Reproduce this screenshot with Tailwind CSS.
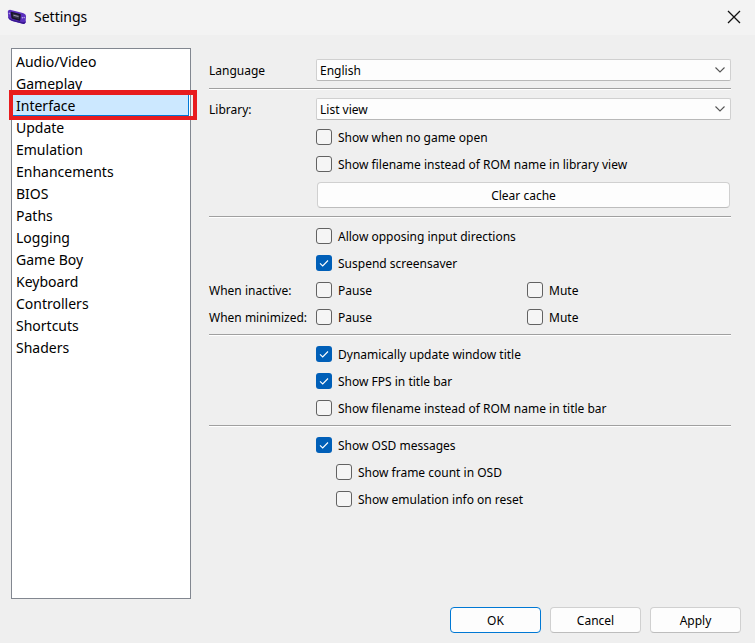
<!DOCTYPE html>
<html lang="en">
<head>
<meta charset="utf-8">
<meta name="viewport" content="width=device-width, initial-scale=1">
<title>Settings</title>
<script src="https://cdn.jsdelivr.net/npm/@tailwindcss/browser@4"></script>
</head>
<body class="flex min-h-screen flex-col bg-[#efefef] font-['Noto_Sans','Open_Sans',sans-serif] text-xs leading-[18px] text-black">

<svg class="hidden" aria-hidden="true">
  <symbol id="chevron" viewBox="0 0 12 8"><path d="M1.500 1.500 6 6l4.500-4.500" fill="none" stroke="#555" stroke-width="1.100"/></symbol>
  <symbol id="tick" viewBox="0 0 16 16"><path d="m4 8.300 2.700 2.700L12 5.500" fill="none" stroke="#fff" stroke-width="1.100"/></symbol>
</svg>

<header class="flex h-[35px] items-center justify-between bg-[#f3f3f3] pr-3.5 pb-0.5 pl-[7px]">
  <div class="flex items-center gap-[7px]">
    <svg class="size-5" viewBox="0 0 20 20" aria-hidden="true">
      <path d="M.8 4.600Q1 2.900 3 2.800L14.800 5.800Q18.600 6.700 19 8.900L18.600 15.500Q17.900 17.300 15.800 16.800L5.300 14Q1.600 12.800 1.200 10.300Z" fill="#5a2fbd"/>
      <path d="M1.200 9.500 1.500 11Q2.400 13 5.300 14L15.800 16.800Q17.900 17.300 18.600 15.500L18.700 14Q17.500 15.800 15.600 15.200L5.300 12.400Q2 11.500 1.200 9.500Z" fill="#3a1890"/>
      <path d="M4.300 4.700 13.200 7Q13.900 7.200 13.800 8L13.300 13.100Q13.200 13.900 12.400 13.700L5.200 11.700Q4.500 11.500 4.400 10.800L3.700 5.300Q3.700 4.600 4.300 4.700Z" fill="#18142c"/>
      <path d="m5.600 6.600 6.700 1.700-.3 3.600-6-1.600Z" fill="#36344b"/>
      <path d="m6.500 8.200 5 1.300" stroke="#9894b0" stroke-width="1.100"/>
      <path d="M1.700 6.500h1.500M2.400 5.700v1.700" stroke="#b6a6e8" stroke-width=".7"/>
      <circle cx="15.400" cy="10.800" r=".7" fill="#c0b3ea"/><circle cx="17.200" cy="10.500" r=".7" fill="#c0b3ea"/>
    </svg>
    <h1 class="text-sm leading-5">Settings</h1>
  </div>
  <button type="button" aria-label="Close" class="flex size-3.5 items-center justify-center">
    <svg class="size-3.5" viewBox="0 0 14 14"><path d="M1 1 13 13M13 1 1 13" stroke="#111" stroke-width="1.300"/></svg>
  </button>
</header>

<main class="flex flex-1 gap-[18px] pt-[13px] pr-6 pl-[11px]">
  <nav aria-label="Settings sections" class="w-[180px] shrink-0 border border-[#828790] bg-white pt-0.5 text-sm leading-[22px]">
    <ul>
      <li><a href="#" class="block pl-1">Audio/Video</a></li>
      <li><a href="#" class="block pl-1">Gameplay</a></li>
      <li class="relative h-[22px]">
        <a href="#" aria-current="page" class="mr-px block h-[21px] border-r border-b border-[#0078d7] bg-[#cce8ff] pl-1 leading-[21px]">Interface</a>
        <span class="pointer-events-none absolute -top-[5px] -right-[7px] -bottom-[3px] -left-[3px] border-4 border-t-5 border-[#e81c1e]"></span>
      </li>
      <li><a href="#" class="block pl-1">Update</a></li>
      <li><a href="#" class="block pl-1">Emulation</a></li>
      <li><a href="#" class="block pl-1">Enhancements</a></li>
      <li><a href="#" class="block pl-1">BIOS</a></li>
      <li><a href="#" class="block pl-1">Paths</a></li>
      <li><a href="#" class="block pl-1">Logging</a></li>
      <li><a href="#" class="block pl-1">Game Boy</a></li>
      <li><a href="#" class="block pl-1">Keyboard</a></li>
      <li><a href="#" class="block pl-1">Controllers</a></li>
      <li><a href="#" class="block pl-1">Shortcuts</a></li>
      <li><a href="#" class="block pl-1">Shaders</a></li>
    </ul>
  </nav>

  <form id="settings" class="min-w-0 flex-1 pt-[11px]">
    <div class="grid grid-cols-[107px_minmax(0,1fr)] items-center">
      <label for="language" class="pt-0.5">Language</label>
      <div class="relative">
        <select id="language" class="block h-[22px] w-full appearance-none rounded-xs border border-[#d0d0d0] border-b-[#b8b8b8] bg-[#fdfdfd] px-[3px] pt-0.5"><option>English</option></select>
        <svg class="pointer-events-none absolute top-[7px] right-[5px] h-2 w-3"><use href="#chevron"/></svg>
      </div>
    </div>
    <hr class="my-[7px] h-0.5 border-t border-b border-t-[#a0a0a0] border-b-white">

    <div class="grid grid-cols-[107px_minmax(0,1fr)] items-center pt-px">
      <label for="library" class="pt-0.5">Library:</label>
      <div class="relative">
        <select id="library" class="block h-[22px] w-full appearance-none rounded-xs border border-[#d0d0d0] border-b-[#b8b8b8] bg-[#fdfdfd] px-[3px] pt-0.5"><option>List view</option></select>
        <svg class="pointer-events-none absolute top-[7px] right-[5px] h-2 w-3"><use href="#chevron"/></svg>
      </div>
      <div class="col-start-2 flex flex-col gap-[11px] pt-[9px] pb-2.5">
        <label class="flex h-4 gap-1.5"><input type="checkbox" class="size-4 appearance-none rounded-[3px] border border-[#626262] bg-[#f5f5f5]">Show when no game open</label>
        <label class="flex h-4 gap-1.5"><input type="checkbox" class="size-4 appearance-none rounded-[3px] border border-[#626262] bg-[#f5f5f5]">Show filename instead of ROM name in library view</label>
      </div>
      <button type="button" class="col-start-2 mx-px h-[26px] rounded border border-[#d0d0d0] border-b-[#bdbdbd] bg-[#fdfdfd] pt-0.5">Clear cache</button>
    </div>
    <hr class="mt-2 mb-2.5 h-0.5 border-t border-b border-t-[#a0a0a0] border-b-white">

    <div class="grid grid-cols-[107px_minmax(0,1fr)] gap-y-[11px]">
      <label class="col-start-2 flex h-4 gap-1.5"><input type="checkbox" class="size-4 appearance-none rounded-[3px] border border-[#626262] bg-[#f5f5f5]">Allow opposing input directions</label>
      <label class="col-start-2 flex h-4 gap-1.5"><span class="relative size-4"><input type="checkbox" checked class="block size-4 appearance-none rounded-[3px] bg-[#005fb8]"><svg class="pointer-events-none absolute inset-0 size-4"><use href="#tick"/></svg></span>Suspend screensaver</label>
      <span id="inactive" class="h-4">When inactive:</span>
      <div role="group" aria-labelledby="inactive" class="grid grid-cols-2 gap-[7px]">
        <label class="flex h-4 gap-1.5"><input type="checkbox" class="size-4 appearance-none rounded-[3px] border border-[#626262] bg-[#f5f5f5]">Pause</label>
        <label class="flex h-4 gap-1.5"><input type="checkbox" class="size-4 appearance-none rounded-[3px] border border-[#626262] bg-[#f5f5f5]">Mute</label>
      </div>
      <span id="minimized" class="h-4 whitespace-nowrap">When minimized:</span>
      <div role="group" aria-labelledby="minimized" class="grid grid-cols-2 gap-[7px]">
        <label class="flex h-4 gap-1.5"><input type="checkbox" class="size-4 appearance-none rounded-[3px] border border-[#626262] bg-[#f5f5f5]">Pause</label>
        <label class="flex h-4 gap-1.5"><input type="checkbox" class="size-4 appearance-none rounded-[3px] border border-[#626262] bg-[#f5f5f5]">Mute</label>
      </div>
    </div>
    <hr class="mt-[9px] mb-2.5 h-0.5 border-t border-b border-t-[#a0a0a0] border-b-white">

    <div class="flex flex-col gap-[11px] pl-[107px]">
      <label class="flex h-4 gap-1.5"><span class="relative size-4"><input type="checkbox" checked class="block size-4 appearance-none rounded-[3px] bg-[#005fb8]"><svg class="pointer-events-none absolute inset-0 size-4"><use href="#tick"/></svg></span>Dynamically update window title</label>
      <label class="flex h-4 gap-1.5"><span class="relative size-4"><input type="checkbox" checked class="block size-4 appearance-none rounded-[3px] bg-[#005fb8]"><svg class="pointer-events-none absolute inset-0 size-4"><use href="#tick"/></svg></span>Show FPS in title bar</label>
      <label class="flex h-4 gap-1.5"><input type="checkbox" class="size-4 appearance-none rounded-[3px] border border-[#626262] bg-[#f5f5f5]">Show filename instead of ROM name in title bar</label>
    </div>
    <hr class="mt-[9px] mb-2.5 h-0.5 border-t border-b border-t-[#a0a0a0] border-b-white">

    <div class="flex flex-col gap-[11px] pl-[107px]">
      <label class="flex h-4 gap-1.5"><span class="relative size-4"><input type="checkbox" checked class="block size-4 appearance-none rounded-[3px] bg-[#005fb8]"><svg class="pointer-events-none absolute inset-0 size-4"><use href="#tick"/></svg></span>Show OSD messages</label>
      <label class="ml-5 flex h-4 gap-1.5"><input type="checkbox" class="size-4 appearance-none rounded-[3px] border border-[#626262] bg-[#f5f5f5]">Show frame count in OSD</label>
      <label class="ml-5 flex h-4 gap-1.5"><input type="checkbox" class="size-4 appearance-none rounded-[3px] border border-[#626262] bg-[#f5f5f5]">Show emulation info on reset</label>
    </div>
  </form>
</main>

<footer class="flex justify-end gap-[9px] pt-2 pr-3.5 pb-2.5">
  <button type="submit" form="settings" class="h-[26px] w-[91px] rounded border border-[#0078d4] bg-[#fdfdfd] pt-0.5">OK</button>
  <button type="button" class="h-[26px] w-[91px] rounded border border-[#d0d0d0] border-b-[#bdbdbd] bg-[#fdfdfd] pt-0.5">Cancel</button>
  <button type="button" class="h-[26px] w-[91px] rounded border border-[#d0d0d0] border-b-[#bdbdbd] bg-[#fdfdfd] pt-0.5">Apply</button>
</footer>
</body>
</html>
